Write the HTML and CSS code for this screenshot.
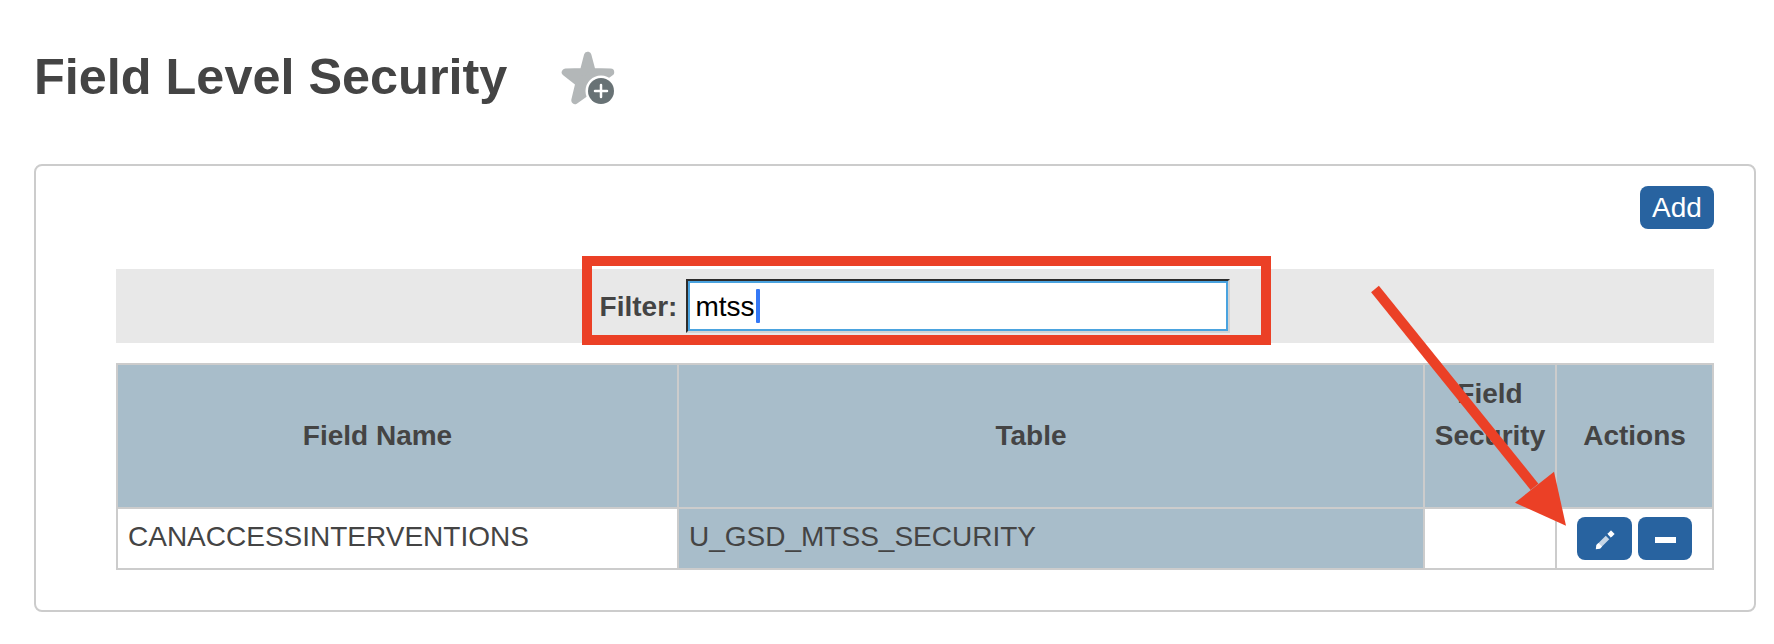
FILE: index.html
```html
<!DOCTYPE html>
<html lang="en">
<head>
  <meta charset="UTF-8">
  <meta name="viewport" content="width=device-width, initial-scale=1.0">
  <title>Field Level Security</title>
  <link rel="stylesheet" href="styles.css">
</head>
<body>
  <div class="page-header">
    <h1>Field Level Security</h1>
    <svg class="favorite" width="56" height="56" viewBox="0 0 56 56">
      <path d="M27.700 5.500L32 21.800L50.500 22.300L36.200 32.500L41 50.300L27.700 41.500L15 50.300L19.200 33L5.500 22.300L23.500 21.800Z" fill="#b3b7b8" stroke="#b3b7b8" stroke-width="7.500" stroke-linejoin="round"/>
      <circle cx="41" cy="41" r="15.500" fill="#fff"/>
      <path d="M41 56H56V41Z" fill="#fff"/>
      <circle cx="41" cy="41" r="13" fill="#687275"/>
      <path d="M35 41H47M41 35V47" stroke="#fff" stroke-width="2.500" stroke-linecap="round"/>
    </svg>
  </div>

  <div class="box">
    <div class="toolbar">
      <button class="btn btn-add">Add</button>
    </div>

    <div class="filter-bar">
      <label for="filter">Filter:</label>
      <div class="filter-field">
        <input id="filter" type="text" value="mtss">
        <span class="caret"></span>
      </div>
      <div class="highlight"></div>
    </div>

    <table>
      <colgroup>
        <col class="col-name">
        <col class="col-table">
        <col class="col-security">
        <col class="col-actions">
      </colgroup>
      <thead>
        <tr>
          <th class="sortable">Field Name</th>
          <th class="sortable">Table</th>
          <th class="sortable">Field Security</th>
          <th>Actions</th>
        </tr>
      </thead>
      <tbody>
        <tr>
          <td>CANACCESSINTERVENTIONS</td>
          <td class="sorted">U_GSD_MTSS_SECURITY</td>
          <td></td>
          <td>
            <div class="actions">
              <button class="btn btn-edit" aria-label="Edit">
                <svg width="22" height="22" viewBox="0 0 22 22">
                  <path d="M4.500 17.500L13.500 8.500" stroke="#c6d6e6" stroke-width="5"/>
                  <path d="M1.800 20.200L2.300 16L4.500 14L8 17.500L6 19.700Z" fill="#fff"/>
                  <path d="M17 1.800L20.200 5L17 8.200L13.800 5Z" fill="#fff" stroke="#fff" stroke-width="1" stroke-linejoin="round"/>
                </svg>
              </button>
              <button class="btn btn-delete" aria-label="Delete"><span class="minus"></span></button>
            </div>
          </td>
        </tr>
      </tbody>
    </table>
  </div>

  <!-- Pointer to the edit button -->
  <svg class="arrow" width="200" height="250" viewBox="0 0 200 250">
    <path d="M15 9L174.500 206.800" stroke="#eb4026" stroke-width="10"/>
    <path d="M206 245.700L194 191.700L155 222.700Z" fill="#eb4026"/>
  </svg>
</body>
</html>
```

FILE: styles.css
```css
body {
  position: relative;
  margin: 0;
  padding: 44px 18px 32px 34px;
  background-color: #fff;
  color: #444;
  font-family: Arial, "Liberation Sans", sans-serif;
  font-size: 28px;
  line-height: 42px;
}
.page-header {
  display: flex;
  height: 120px;
}
h1 {
  margin: 0;
  font-size: 50.4px;
  line-height: 66px;
}
.favorite {
  margin: 6px 0 0 52.6px;
}
.box {
  box-sizing: border-box;
  height: 448px;
  padding: 20px 40px 40px 80px;
  border: 2px solid #ccc;
  border-radius: 8px;
}
.toolbar {
  display: flex;
  justify-content: flex-end;
  margin-bottom: 40px;
}
.btn {
  display: flex;
  align-items: center;
  justify-content: center;
  height: 43px;
  padding: 0;
  border: 0;
  border-radius: 8px;
  background-color: #2863a0;
  color: #fff;
  font: inherit;
}
.btn-add {
  width: 74px;
}
.filter-bar {
  position: relative;
  display: flex;
  align-items: center;
  justify-content: center;
  gap: 9px;
  height: 74px;
  margin-bottom: 20px;
  background-color: #e8e8e8;
}
.filter-bar label {
  padding-top: 2px;
  font-weight: bold;
}
.filter-field {
  position: relative;
  height: 54px;
}
.filter-field input {
  box-sizing: border-box;
  display: block;
  width: 544px;
  height: 54px;
  padding: 2px 7px 0;
  border: 2px solid;
  border-color: #2c2c2c #d3d3d3 #d3d3d3 #2c2c2c;
  outline: 0;
  box-shadow: inset 0 0 0 2px #4aa3df;
  background-color: #fff;
  color: #000;
  font: inherit;
}
.caret {
  position: absolute;
  top: 10px;
  left: 70px;
  width: 4px;
  height: 34px;
  border-radius: 1px;
  background-color: #3478f6;
}
.highlight {
  position: absolute;
  top: -13px;
  left: 466px;
  box-sizing: border-box;
  width: 689px;
  height: 89px;
  border: 10px solid #eb4026;
}
table {
  width: 1598px;
  table-layout: fixed;
  border-collapse: collapse;
}
.col-name {
  width: 561px;
}
.col-table {
  width: 746px;
}
.col-security {
  width: 132px;
}
.col-actions {
  width: 157px;
}
th,
td {
  padding: 8px;
  border: 2px solid #ccc;
}
th {
  height: 126px;
  background-color: #a8bdca;
}
/* room for the sort icon */
.sortable::after {
  content: " ";
  display: inline-block;
  width: 40px;
  height: 20px;
}
td {
  height: 43px;
  padding: 7px 10px 9px;
  vertical-align: top;
}
.sorted {
  background-color: #a8bdca;
}
.actions {
  display: flex;
  justify-content: center;
  gap: 6px;
  margin: 1px 0 -1px;
}
.btn-edit {
  width: 55px;
}
.btn-edit svg {
  margin-top: 3px;
}
.btn-delete {
  width: 54px;
}
.minus {
  width: 21px;
  height: 6px;
  margin-top: 3px;
  background-color: #fff;
}
.arrow {
  position: absolute;
  top: 280px;
  left: 1360px;
  overflow: visible;
}
```
